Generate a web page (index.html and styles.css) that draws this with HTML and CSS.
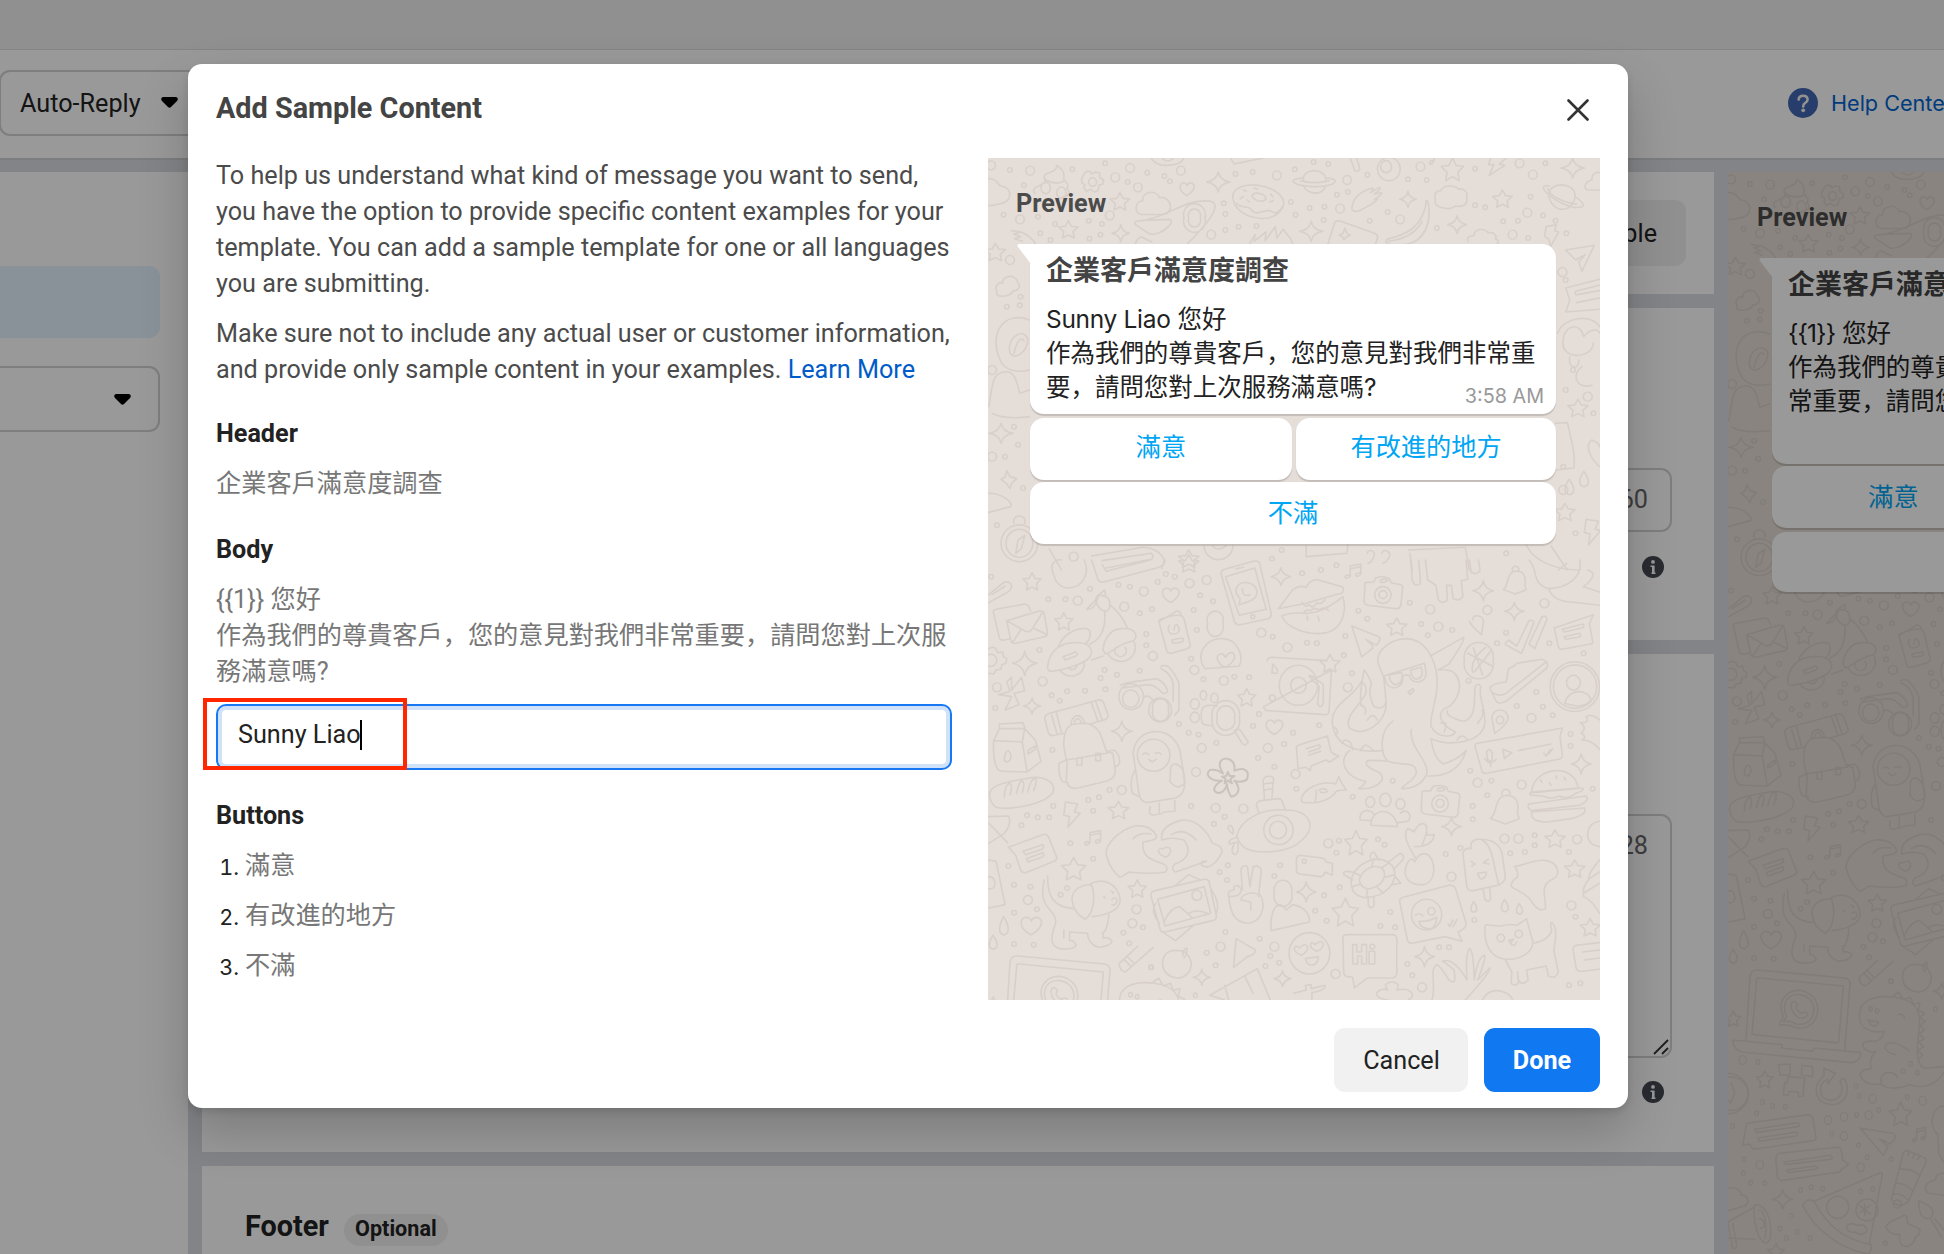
FILE: index.html
```html
<!DOCTYPE html>
<html lang="en">
<head>
<meta charset="utf-8">
<title>Add Sample Content</title>
<link rel="stylesheet" href="styles.css">
</head>
<body>
<svg class="defs" width="0" height="0" aria-hidden="true">
  <defs>
    <marker id="ring-s" markerUnits="userSpaceOnUse" markerWidth="20" markerHeight="20" refX="10" refY="10"><ellipse class="ring" cx="10" cy="10" rx="5.6" ry="7"/></marker>
    <marker id="ring-l" markerUnits="userSpaceOnUse" markerWidth="30" markerHeight="36" refX="15" refY="18"><ellipse class="ring" cx="15" cy="18" rx="11" ry="13.5"/></marker>
    <path id="spark" d="M0-30Q4-5 30 0Q4 5 0 30Q-4 5-30 0Q-4-5 0-30Z"/>
    <path id="star" d="M0-26L8-9L25-7L12 7L15 26L0 17L-15 26L-12 7L-25-7L-8-9Z"/>
    <path id="heart" d="M0 26C-30 8-26-20-12-22Q-3-22 0-12Q6-26 17-20C30-10 20 12 0 26Z"/>
    <path id="cloud" d="M-38 28C-58 24-54-6-34-6C-34-32 4-34 12-14C34-18 48 4 38 18Q34 28 20 28Z"/>
    <path id="note" d="M-8 16V-14L18-20V10M-8-6L18-12M-8 16C-12 26-24 24-20 16Q-14 10-8 16M18 10C14 20 2 18 6 10Q12 4 18 10"/>
    <path id="drop" d="M0-22C14 0 16 20 2 24C-14 22-12 2 0-22Z"/>
    <path id="bolt" d="M-14-38L16-32L8-8L22-4L-8 38L-4 6L-18 2Z"/>
    <path id="bell" d="M-36 34C-18 16-28-34 4-36Q36-34 30 14Q30 24 34 34L0 50Q-20 40-36 34ZM-8-38A10 12 0 1 1 10-36"/>
    <path id="camera" d="M-44-28L-22-30L-18-42Q0-50 16-40L20-28L44-22Q50-20 48-10L44 40Q40 52 30 50L-36 40Q-46 38-46 26ZM0-16A20 25 0 1 0 .1-16ZM0-4A10 12 0 1 0 .1-4ZM-6-36Q6-42 12-34Q4-26-6-30Z"/>
    <g id="doodles">
      <g transform="matrix(.3903 0 0 .3333 0 0)">
        <path d="M0 62C28 62 22 82 34 84C66 90 62 136 28 138Q10 144 0 142M145 62C136 40 178 48 176 22C196 36 196 52 194 62C200 78 160 80 145 62ZM120 106C104 84 150 84 146 66M196 68Q210 80 202 92C214 104 206 116 190 118M136 90A12 17 0 1 1 160 90A12 17 0 1 1 136 90M176 104A12 17 0 1 1 200 104A12 17 0 1 1 176 104"/>
        <path d="M245 50L252 40H262L266 48L276 42L286 44V58L296 66L294 78L284 82L282 98L272 102L264 94L252 100L246 88L248 80L240 74V62ZM258 72A10 13 0 1 0 278 72A10 13 0 1 0 258 72"/>
        <path d="M418 0Q430 24 460 22Q494 22 502 0M446 0Q460 18 476 0M622 0L630 18L706 0M928 0L940 38Q954 42 952 28L944 0"/>
        <path d="M378 200C370 188 380 186 466 184Q476 190 462 206C448 224 420 234 412 226ZM410 184C470 170 510 120 570 130C600 140 570 190 500 270M502 180A28 34 0 1 1 556 180A28 34 0 1 1 502 180M514 180A16 20 0 1 1 544 180A16 20 0 1 1 514 180M376 270Q376 246 392 236L420 252"/>
        <path d="M628 124C622 96 650 76 690 82C736 88 768 120 754 150C736 186 700 186 668 174Q632 156 628 124ZM636 136C650 156 670 138 676 158C692 176 708 150 726 160C740 170 748 160 754 146M676 112C684 100 712 106 712 124C700 136 680 128 676 112ZM654 96l8 3M682 90l8 4M724 108l6 8M722 132l8-4M646 122l8-6M664 126l6 6"/>
        <path d="M808 68C804 28 866 28 866 68C858 76 816 76 808 68ZM806 60C760 64 784 84 836 86C890 86 908 64 868 60M808 82C816 110 858 116 866 82M800 68Q836 80 874 68"/>
        <path d="M932 150C938 110 960 100 984 90Q990 92 980 104L1002 88Q1010 92 990 108L1008 104Q1008 112 990 124L998 124C986 140 962 152 948 160Q932 162 932 150ZM998 30A28 34 0 1 1 1056 36A28 34 0 1 1 998 30M1006 26A14 18 0 1 1 1034 26A14 18 0 1 1 1006 26M1144 0Q1140 22 1132 18Q1130 6 1142 8"/>
        <path d="M1146 122C1142 104 1150 98 1160 98C1166 78 1200 82 1206 94C1222 88 1230 108 1226 116C1232 140 1216 148 1198 144Q1184 156 1168 150C1148 148 1144 136 1146 122ZM1122 128Q1124 124 1128 134Q1138 210 1100 246Q1080 262 1040 262Q1012 256 1022 244C1070 230 1110 210 1122 140ZM1026 250Q1090 240 1112 190M1288 0L1282 20H1296L1284 52L1324 22L1310 18L1328 0"/>
        <path d="M1436 110C1440 70 1500 72 1504 110C1502 170 1444 168 1436 110ZM1438 84C1400 74 1440 130 1500 148C1544 152 1520 128 1504 116M1434 92C1440 116 1480 136 1508 138M1568 44C1560 40 1544 48 1548 66C1530 70 1524 90 1536 96H1568M1230 250C1226 232 1238 234 1244 234C1248 210 1274 210 1280 224C1300 220 1304 236 1300 242Q1316 250 1300 262M1430 206L1456 200L1452 218L1462 222L1442 264L1436 242L1426 236Z"/>
        <path d="M870 262L888 194Q892 186 904 190L990 226Q1000 230 998 240L992 262M900 232L910 226L914 210L920 226L928 232L916 238L912 246L908 236ZM668 262L684 230L682 250L712 222L710 248L736 206L740 240L756 214L776 244L782 262M60 218L84 222L66 228L84 236L68 242L88 250M84 222Q110 234 122 258"/>
        <use href="#star" transform="translate(206 214)"/><use href="#star" transform="translate(338 130)"/><use href="#star" transform="translate(1190 34) scale(1.15 1.3)"/><use href="#star" transform="translate(1318 122)"/>
        <use href="#spark" transform="translate(590 72)"/><use href="#spark" transform="translate(828 220)"/><use href="#spark" transform="translate(1076 124) scale(.7 .8)"/><use href="#spark" transform="translate(1202 200) scale(.8 .9)"/><use href="#spark" transform="translate(1498 30)"/><use href="#spark" transform="translate(340 226) scale(.75 .85)"/>
        <use href="#heart" transform="translate(510 92) scale(.8)"/><use href="#cloud" transform="translate(428 136) scale(.95 1.2)"/>
        <path class="dots-l" d="M8 22L108 38L326 58L384 88L494 38L740 52L920 66L1108 26L1396 50L1362 16L312 172L572 230L1056 184L902 152L1382 164L1344 230L82 184L364 30"/>
        <path class="dots-s" d="M56 36L92 82L216 34L300 16L358 72L408 44L452 54L466 70L634 48L678 42L786 34L834 12L872 18L972 50L1076 64L1124 66L1248 32L1428 16L1248 142L1274 148L1390 116L1422 172L1454 188L1482 226L1384 240L1320 190L1358 188L1150 210L1024 162L978 188L894 110L922 102L860 186L824 150L862 146L788 170L776 132L688 204L642 206L608 216L608 168L604 136L260 242L288 230L258 188L292 198L160 246L134 226L172 198L128 176L40 170"/>
      </g>
      <g transform="matrix(.408 0 0 .3333 -8.2 -18)">
        <path d="M42 454C34 436 50 424 56 430C54 404 90 402 92 426C104 440 92 454 82 452C74 474 34 474 42 454ZM122 540C60 510 20 580 50 660C60 690 90 700 122 690M74 640C64 590 110 560 118 600C114 640 86 660 74 640ZM84 640C90 600 104 590 108 602M22 800C32 740 28 700 60 696C90 690 92 740 98 760L122 750M30 820Q60 840 122 830M20 1060C60 1060 80 1090 76 1100L20 1118M52 1210A44 54 0 1 1 142 1210A44 54 0 1 1 52 1210M64 1210A32 41 0 1 1 130 1210A32 41 0 1 1 64 1210M88 1240L94 1200L110 1186L102 1226ZM84 1150A14 16 0 1 1 110 1150M52 1018L62 1012L66 992L74 1010L90 1016L78 1030L74 1046L66 1032Z"/>
        <path d="M1436 330L1506 316L1476 394L1468 366L1484 344L1460 360ZM1519 418L1436 444Q1442 464 1446 480L1436 516L1519 508M1519 436L1460 454Q1456 464 1464 464L1519 452M1519 474L1462 488M1416 580C1430 530 1500 520 1519 560M1430 600C1430 560 1470 540 1480 590C1500 560 1519 570 1519 580M1430 600C1420 660 1500 660 1504 610M1446 650C1440 690 1470 690 1468 660M1476 680C1450 700 1460 750 1500 736M1440 848C1450 900 1460 940 1456 984L1411 990M1411 850L1440 848M1519 980C1500 960 1480 920 1500 900Q1519 910 1519 920"/>
        <path d="M170 1226L200 1290M274 1248L400 1222Q440 1226 452 1260L446 1286M300 1262L420 1240Q430 1250 420 1258L310 1284M550 1218A34 40 0 0 0 620 1218M570 1218Q584 1236 604 1218M800 1218V1250L900 1240L902 1216M950 1240C950 1226 972 1230 966 1250Q960 1268 952 1270M986 1240C986 1226 1008 1230 1004 1250Q996 1268 988 1270M1050 1230L1190 1222L1200 1290M1060 1290L1054 1240M1340 1216C1360 1270 1420 1290 1470 1290M1400 1218L1440 1290"/>
        <use href="#star" transform="translate(38 336)"/><use href="#spark" transform="translate(52 880)"/><use href="#star" transform="translate(1466 804)"/><use href="#star" transform="translate(1434 1116)"/><use href="#bolt" transform="translate(1500 1176)"/><use href="#drop" transform="translate(1480 1016)"/><use href="#drop" transform="translate(1444 1040)"/><use href="#star" transform="translate(512 1256)"/>
        <path class="dots-l" d="M74 360L1428 396L30 690L1490 770L30 950L1430 1050L230 1250"/>
        <path class="dots-s" d="M100 470L66 500L98 496L84 860L94 914L62 950L106 1044L42 1156L1436 750L1454 690L1504 820L1430 980L1460 1180L1436 420L716 1256L740 1230L1290 1240"/>
      </g>
      <g transform="matrix(.408 0 0 .3333 -8.2 402)">
        <path d="M180 40C170 10 186-4 200 0M256 0C268 30 260 82 216 84Q188 82 180 40M274 0L290 60Q294 68 304 66L440 22Q454 14 454 0M300 14L310 34L418 0M22 104L58 68Q74 60 78 78Q78 92 60 102L22 128M30 104L62 78M34 160Q30 152 40 148L110 132Q120 132 124 152M34 160L48 234Q50 242 60 240L74 236M66 182L144 154Q156 150 158 162L166 218Q166 228 158 230L88 250Q78 252 76 242ZM66 182L112 214Q122 218 128 208L154 156M80 248L100 210M162 222L134 206"/>
        <path d="M286 110L306 90L308 104M262 148L290 112Q282 150 262 148M284 118C284 100 316 104 318 126C322 150 308 160 300 150Q286 140 284 118ZM306 152Q312 230 270 252M318 134Q346 160 362 204M166 320C170 280 190 250 230 248C276 244 284 280 262 300C240 318 200 330 176 334Q166 334 166 320ZM192 262C200 230 230 202 262 206C276 210 272 240 258 252M302 270C304 240 320 204 350 206C384 202 392 236 372 244C344 250 324 276 308 282ZM314 280A34 40 0 1 0 378 246M334 262A14 17 0 1 0 356 262M196 330A32 34 0 0 0 256 310M216 322A12 14 0 0 0 238 318M204 290L234 276Q244 282 236 288L210 300ZM274 300L302 288"/>
        <path d="M22 266L30 262L38 264L44 278L56 276L58 290L66 296L64 310L54 314L52 328L40 330L34 342L22 340M22 284A15 18 0 1 1 22 318M66 366L78 352V390L102 352L110 392L84 400L96 434L62 450L78 410L46 404L74 394ZM48 506V492L106 488L110 502M48 506L34 542L104 546L110 506ZM34 542Q32 600 42 624Q46 634 56 634L116 636L104 546M110 506L136 540L150 604L116 636M60 600C62 560 78 570 76 596Q68 614 60 600ZM118 572L136 558V568L118 582ZM24 708C20 670 80 664 120 654C160 646 190 670 178 700C150 740 60 750 40 742Q26 730 24 708ZM60 712C60 690 66 670 74 670Q82 676 74 704M90 700C94 680 96 664 104 662Q112 668 104 698M118 696C122 670 128 656 136 654Q142 664 132 692"/>
        <path d="M160 480Q156 466 172 460L290 420Q300 418 304 430L314 464Q316 476 304 480L270 492M160 480L168 518Q172 530 182 526L206 520M176 466L190 524M188 458L200 516M274 430L290 486M284 424L300 480M224 492A16 24 0 0 1 256 490M232 490A8 14 0 0 1 248 490M206 560Q204 500 230 492L262 490Q290 500 298 530L312 580M206 560L212 600L310 580M214 602L212 664Q218 690 240 684L310 664Q334 654 332 630L326 580L312 576M194 610L216 598M194 610Q192 650 204 666L216 668M314 574L330 570Q346 590 342 610Q336 622 330 620M238 594h12v22h-12ZM284 580h12v22h-12Z"/>
        <path d="M342 400A28 36 0 1 1 400 420A28 36 0 1 1 342 400M350 416A20 26 0 1 1 390 416A20 26 0 1 1 350 416M414 450A28 36 0 1 1 470 450A28 36 0 1 1 414 450M424 450A20 26 0 1 1 462 450A20 26 0 1 1 424 450M402 412Q412 402 424 420M344 376Q350 368 434 356Q452 366 460 390Q460 402 448 400Q430 374 412 374L350 384M444 320Q450 314 460 318Q480 340 488 370V450L478 466M444 326Q470 340 474 372V424"/>
        <path d="M376 580C380 500 470 490 490 570L500 640Q510 700 480 714L410 728Q394 726 390 700ZM386 586A40 48 0 1 1 466 586A40 48 0 1 1 386 586M400 582Q408 576 414 584M430 580Q438 574 444 582M414 598Q422 612 432 598M468 620Q480 600 498 630L502 670Q484 694 466 664ZM380 632Q366 660 374 700L390 710M418 740Q412 764 424 766L440 762V730M444 762Q448 754 478 754V722"/>
        <path d="M440 190Q436 180 446 176L476 166Q496 164 500 174L516 256Q516 264 508 266L470 280Q460 280 458 272ZM440 184L484 152Q494 156 494 168M464 196Q458 218 472 222Q492 222 488 204Q484 190 478 196L476 210M470 240L496 234Q502 240 496 246L474 250ZM558 190A20 28 0 1 1 596 190A20 30 0 1 1 558 190M544 310C534 270 560 232 598 236C632 240 648 290 636 318Q600 322 552 326ZM602 322C580 310 576 284 590 282Q598 280 602 292Q612 272 622 280Q632 300 602 322Z"/>
        <path d="M592 44Q590 32 600 28L670 4Q682 0 686 10L714 160Q716 172 706 176L638 194Q628 196 624 184ZM602 50L674 24L702 148L636 166ZM628 26L646 22M664 170a5 6 0 1 0 10 0a5 6 0 1 0-10 0M636 134L638 116C616 90 634 64 656 68C684 74 686 110 664 122ZM644 86C642 104 652 110 662 104"/>
        <path d="M732 146L768 88Q784 74 800 82Q810 56 830 60L888 80Q896 90 886 100L850 112L800 130ZM740 168Q760 156 800 160Q840 160 890 110C900 150 890 206 850 218C800 230 750 200 740 168ZM790 126Q796 144 808 134Q816 150 826 128Q838 136 846 118M794 160Q798 146 810 152Q822 140 832 150Q846 138 854 152M802 168L804 180M828 168L832 182"/>
        <path d="M704 302Q706 292 716 292L850 302M862 330L856 454Q854 466 844 464L706 452Q696 450 696 440ZM734 376A47 60 0 1 1 828 376A47 60 0 1 1 734 376M762 376A19 24 0 1 1 800 376A19 24 0 1 1 762 376M808 350Q806 346 814 348L842 374V430Q836 450 828 432L832 380ZM718 312L730 330L728 340H716ZM710 414a7 9 0 1 0 14 0a7 9 0 1 0-14 0M570 474A34 42 0 1 1 636 474A34 42 0 1 1 570 474M582 474A22 28 0 1 1 624 474A22 28 0 1 1 582 474M624 512Q632 504 638 510L658 546Q652 560 644 552ZM540 406a8 14 0 1 0 16 0a8 14 0 1 0-16 0M566 414a9 14 0 1 0 18 0a9 14 0 1 0-18 0M516 430a10 14 0 1 0 22 4a10 14 0 1 0-22-4M516 470a10 14 0 1 0 22 4a10 14 0 1 0-22-4M582 438Q550 430 544 450Q540 490 550 494L572 498"/>
        <path class="bold" d="M590 604C600 588 628 596 624 632C646 620 664 630 654 660Q636 670 624 662C644 690 630 708 616 710Q606 690 606 672C600 700 582 706 574 690Q576 672 594 662C560 664 552 640 564 630Q580 626 596 640C588 624 586 612 590 604ZM608 636L612 648L624 648L614 658L618 670L608 662L600 670L602 656L594 650L604 648Z"/>
        <path d="M976 310C970 270 1010 236 1046 236C1094 240 1110 290 1118 330C1130 400 1100 470 1106 500C1126 540 1160 530 1166 516C1120 490 1120 450 1150 440C1190 400 1180 330 1142 330L1124 330M976 310L990 352Q994 400 996 430C996 490 940 536 906 504C892 470 930 440 946 400C950 380 940 366 934 366C920 410 860 430 864 490C870 550 910 580 990 572M990 348L1090 310L1094 340Q1092 364 1074 366Q1056 366 1052 346Q1040 342 1036 350Q1040 378 1016 384Q996 380 994 360ZM1004 344L1034 338Q1040 368 1020 374Q1004 372 1004 344ZM1056 330L1082 322Q1090 354 1070 358Q1056 354 1056 330M1104 288L1186 232Q1190 240 1150 312L1124 330M1106 536C1150 560 1230 550 1238 490C1240 430 1220 420 1228 380Q1222 366 1214 380C1210 420 1220 470 1186 484Q1140 470 1146 452M1012 484C980 510 980 580 1000 604C1040 620 1070 600 1070 640C1060 670 1040 670 1034 686Q1080 686 1096 640C1100 600 1050 560 1058 508M1106 536C1110 580 1120 600 1136 612Q1170 600 1192 572C1180 620 1150 650 1098 648M994 430Q990 450 966 440Q950 400 960 370Q950 340 942 330Q930 400 934 436M906 572C880 600 890 650 946 664Q940 680 928 686Q970 690 986 660Q990 640 966 630Q940 616 950 602Q970 600 1000 604M888 550Q894 530 910 550L914 570M934 572Q944 540 964 572M866 500Q884 510 872 526M936 436Q950 444 944 462M950 480Q964 454 974 480M1130 490Q1150 480 1138 516M1170 540Q1180 516 1196 540M1220 490Q1240 460 1230 450M1050 396l12-10q6 6-8 18Z"/>
        <path d="M912 198L978 230Q986 236 972 256L946 238Q970 260 960 268L936 290ZM1188 302A36 44 0 1 1 1258 302A36 44 0 1 1 1188 302M1196 280L1256 318M1210 264L1232 344M1240 262Q1200 300 1208 336M1252 274L1212 336M1288 250L1296 240L1316 258L1346 182Q1356 178 1358 188L1328 280L1288 254M1346 252L1378 170Q1390 166 1390 178L1360 266ZM1408 204L1504 164L1494 190L1502 244Q1504 252 1496 252L1428 268Q1420 268 1418 260ZM1428 208L1478 192Q1484 200 1476 204L1432 216ZM1432 230L1470 220Q1476 226 1468 232L1436 238ZM1250 384Q1256 370 1290 366L1296 326Q1310 320 1316 310L1378 298Q1396 304 1390 324L1290 424Q1270 436 1264 420ZM1256 398Q1280 416 1300 390L1388 306M1398 380A60 74 0 1 1 1519 380A60 74 0 1 1 1398 380M1406 380A52 64 0 1 1 1512 380A52 64 0 1 1 1406 380M1438 368A17 22 0 1 1 1472 368A17 22 0 1 1 1438 368M1434 430C1440 386 1490 384 1498 420Q1480 450 1434 430"/>
        <path d="M1214 560Q1212 552 1220 550L1428 504L1422 530L1428 586Q1428 596 1418 598L1242 640Q1232 642 1230 630ZM1242 576Q1250 560 1256 580V600Q1248 608 1244 596ZM1238 596Q1250 620 1266 598M1252 608V620M1282 568L1304 578L1286 596ZM1320 572L1400 552M1382 580L1388 588L1398 570M1394 582L1404 566M1256 480C1250 440 1300 440 1294 480Q1286 500 1262 520ZM1266 480a8 10 0 1 0 18 0a8 10 0 1 0-18 0M1208 180C1206 160 1240 164 1234 190L1230 224Q1206 200 1200 184M1519 480Q1500 460 1486 470Q1496 490 1472 488Q1490 504 1474 520Q1490 530 1476 540Q1500 540 1519 568M1352 696C1356 650 1390 630 1420 632C1450 636 1464 660 1466 684ZM1350 706Q1344 696 1356 698L1478 684Q1482 694 1460 700Q1440 720 1420 708Q1400 720 1380 708ZM1346 732L1486 708Q1496 722 1470 736L1352 752Q1340 744 1346 732ZM1352 756L1482 744Q1490 764 1450 776L1390 786Q1350 786 1352 756M1374 660l4 8M1396 668l4 8M1412 648l2 8M1432 652l4 8"/>
        <path d="M776 560L780 556L852 528L860 572Q862 580 880 588L858 606L848 600L812 618L810 632L800 622L780 626ZM800 566L832 554Q838 562 830 566L806 576M806 586L836 574M788 720C790 690 830 660 872 672L880 650L886 668L898 690Q880 690 874 694C860 720 830 730 806 728Q788 730 788 720ZM824 690Q826 710 822 724M832 690Q846 680 852 694Q844 700 834 696M630 826C640 780 690 744 750 750C810 750 826 800 790 840C760 880 680 884 650 864Q634 850 630 826ZM696 810A36 44 0 1 1 768 810A36 44 0 1 1 696 810M710 810A21 26 0 1 1 752 810A21 26 0 1 1 710 810M684 758L678 736Q678 724 690 722L730 716Q740 716 742 726L748 748M698 720L694 660L700 650Q718 646 720 656L716 714M696 672L718 668M698 690L718 686M630 832Q606 840 612 852L632 846Q636 880 626 884Q612 880 624 850M620 822Q602 804 612 796Q624 800 620 822"/>
        <path d="M932 780C930 750 952 744 966 762M958 796C960 740 1016 740 1024 800ZM1030 760C1050 740 1060 770 1050 784L1024 788M932 780L958 782M946 726a11 16 0 1 0 22 0a11 16 0 1 0-22 0M980 720a14 20 0 1 0 28 0a14 20 0 1 0-28 0M1020 732a11 16 0 1 0 22 0a11 16 0 1 0-22 0M1068 894C1040 840 1040 820 1048 806Q1060 810 1064 816Q1080 780 1094 796L1096 826L1114 824Q1110 860 1066 860M1084 856Q1100 810 1094 796M1066 906Q1060 888 1048 908C1030 960 1060 976 1086 974C1120 970 1120 900 1096 882Q1076 876 1066 906ZM910 960C920 910 970 884 1000 906C1030 930 1020 980 980 1004C940 1024 908 1010 910 960ZM930 960C940 920 970 914 984 924C1000 940 990 970 970 980C950 994 934 984 930 960ZM960 920L966 896M984 924L1004 908M992 952L1018 944M974 982L990 1000M950 988L948 1010M934 972L914 980M934 948L914 936M958 900Q954 876 966 876L978 900M1004 904L1030 880Q1044 888 1036 900L1018 924M1018 950L1032 970L1010 974M914 960L892 944Q888 930 912 936M952 1010V1036Q960 1050 966 1036V1010"/>
        <path d="M1184 880Q1188 862 1204 866Q1200 840 1222 838Q1270 836 1280 880L1288 950Q1288 966 1270 976L1210 992Q1198 994 1194 982ZM1230 840Q1250 850 1258 900L1272 976M1204 904L1214 912L1206 918M1246 898L1234 908L1248 912M1220 940L1242 936Q1240 960 1226 956ZM1234 988L1238 1018Q1250 1032 1252 1014L1250 984M1310 920C1340 916 1360 894 1390 902C1420 910 1426 950 1400 960C1370 980 1390 1020 1386 1046Q1370 1060 1350 1020C1340 1000 1310 990 1302 978Q1304 960 1318 952Q1320 930 1310 920ZM1519 900Q1490 940 1492 960Q1476 980 1480 1010Q1500 1020 1519 1060M1494 956L1519 936M1480 1000L1519 970"/>
        <path d="M312 892C300 860 340 810 380 798Q420 794 432 826Q440 840 400 846C396 890 420 900 446 910Q464 916 456 936Q420 944 366 936Q350 950 344 952Q320 930 312 892ZM376 836Q390 816 420 822M446 840Q440 800 490 782C530 770 560 820 570 850Q600 860 592 880C580 910 560 930 544 916Q540 900 556 904L480 936Q466 930 478 912C510 900 520 870 500 840Q470 830 446 840ZM470 824Q500 800 530 840M456 892C430 880 436 862 450 866Q462 856 468 870Q468 884 456 892ZM70 862L154 824Q164 820 168 830L188 890Q190 900 182 904L112 938Q104 940 100 930L88 886ZM106 874L154 854Q160 862 152 868L112 884ZM114 896L154 878Q160 886 152 892L118 906Z"/>
        <path d="M158 960C140 1050 190 1046 186 1090C170 1140 176 1160 196 1166Q230 1170 236 1156Q230 1140 220 1142V1116L264 1120Q264 1150 290 1162Q320 1160 324 1144Q316 1130 302 1134V1116M166 948C166 1010 180 1042 230 1046M226 1020C224 984 260 970 274 976C284 1010 280 1060 258 1078Q230 1060 226 1020ZM268 974C300 950 340 970 344 1020Q344 1060 276 1070M316 1064Q316 1090 306 1116M206 1110V1134M304 1010l3 4M322 994q8 2 4 6M324 1018Q336 1008 336 1024Q332 1040 324 1034M420 1010Q416 996 430 992L550 958Q560 956 562 966L580 1068Q580 1080 570 1082L454 1116Q444 1118 442 1108ZM436 1018L550 980L566 1060L454 1098ZM452 1084Q470 1040 490 1040L520 1072M510 1062Q530 1044 562 1062M520 1006a11 14 0 1 0 24 0a11 14 0 1 0-24 0M480 976L512 944L540 960M450 1118L480 1142L526 1094M568 990Q590 1030 580 1060M432 1030Q416 1050 440 1090"/>
        <path d="M644 990L640 930Q644 912 656 920L662 980L670 920Q686 914 690 930L684 1000C700 1020 700 1080 660 1090C620 1090 614 1050 610 1010Q606 990 624 990Q620 976 632 976ZM612 1010Q640 1010 640 990M640 1020L664 1026V1050M640 1020C640 1000 680 990 684 1010M722 1000A22 30 0 1 1 764 1000A22 30 0 1 1 722 1000M714 1112C712 1060 720 1036 738 1034L752 1050L766 1034C800 1040 810 1070 808 1086ZM776 896Q778 886 786 886L838 894Q848 896 848 906L864 910V946L846 936Q844 950 834 950L784 942Q776 940 776 930ZM790 904a5 6 0 1 0 10 0a5 6 0 1 0-10 0M1030 1030Q1026 1016 1038 1012L1150 976Q1162 974 1166 986L1192 1090Q1194 1104 1172 1116L1182 1144L1140 1130L1060 1150Q1050 1150 1048 1140ZM1058 1064A37 46 0 1 1 1132 1064A37 46 0 1 1 1058 1064M1068 1066Q1078 1056 1086 1068M1098 1054a8 10 0 1 0 18 0a8 10 0 1 0-18 0M1076 1084Q1100 1086 1120 1072Q1118 1110 1098 1106Q1080 1104 1076 1084M1148 1092L1152 1100L1160 1080M1160 1100L1170 1078"/>
        <path d="M758 1180A50 62 0 1 1 858 1180A50 62 0 1 1 758 1180M788 1186C760 1170 772 1150 784 1164Q796 1146 804 1162Q804 1176 788 1186ZM826 1174C800 1160 812 1140 822 1154Q836 1136 842 1152Q842 1166 826 1174ZM798 1196L830 1190Q828 1216 812 1216Q800 1212 798 1196M890 1134Q890 1124 900 1124H1010Q1022 1124 1022 1136V1242Q1020 1254 1010 1254H950L918 1284L914 1252L902 1250Q892 1248 892 1236ZM914 1154H924V1176H936V1154H948V1212H936V1188H926V1212H914ZM954 1174H968V1212H954ZM956 1160a5 6 0 1 0 12 0a5 6 0 1 0-12 0M628 1136L676 1170Q676 1184 656 1190L622 1222Z"/>
        <path d="M1238 1104Q1236 1090 1250 1096L1276 1098Q1300 1090 1316 1096L1340 1076L1352 1130C1366 1170 1330 1200 1290 1198C1250 1194 1236 1150 1238 1104ZM1268 1134a8 10 0 1 0 18 0a8 10 0 1 0-18 0M1312 1122a8 10 0 1 0 18 0a8 10 0 1 0-18 0M1296 1142L1308 1138L1302 1148ZM1300 1150Q1310 1164 1316 1146M1356 1150Q1396 1140 1402 1110C1396 1090 1400 1080 1408 1096C1420 1140 1400 1160 1410 1190L1418 1236Q1410 1260 1394 1248L1388 1218L1340 1230L1344 1260Q1330 1280 1320 1260L1318 1236L1320 1270Q1310 1280 1302 1270L1304 1236L1288 1200M1108 1320C1120 1280 1100 1230 1120 1214Q1126 1214 1150 1260Q1170 1280 1162 1230Q1140 1206 1134 1204Q1160 1190 1194 1260Q1190 1180 1200 1166Q1210 1170 1212 1260Q1220 1190 1238 1186Q1240 1200 1220 1260L1250 1224Q1256 1230 1190 1320M1232 1320Q1244 1290 1270 1292Q1298 1296 1306 1320M1519 1148L1462 1156Q1454 1158 1454 1170L1462 1226Q1466 1236 1476 1234L1519 1228M1519 1170L1478 1176M1519 1194L1482 1200M1000 1320C950 1310 980 1280 1000 1290C976 1260 1040 1256 1022 1290C1060 1280 1070 1310 1050 1320M770 1300L800 1290L798 1276L812 1274V1286L846 1276Q850 1290 814 1298V1320M564 1306L680 1226L712 1320M600 1276L610 1320M650 1250L670 1300M564 1306L600 1320"/>
        <path d="M22 770L70 768Q80 790 60 820L22 850M22 790L68 848M1056 0L1060 60Q1066 84 1080 70L1076 0M1092 0L1098 60L1118 76L1124 120Q1134 134 1146 120L1144 76H1156L1160 116Q1176 126 1184 110L1180 62L1196 58L1192 0M1200 0L1204 36Q1220 48 1226 30L1222 0M1346 0C1370 30 1350 70 1394 86C1440 84 1480 50 1470 0M1394 86Q1406 124 1450 126L1519 136M1418 30L1438 10M1490 30Q1520 40 1480 80L1519 96M1519 784Q1488 790 1490 830Q1494 856 1519 860M22 900L40 904L62 1034L22 1044M22 950Q40 950 36 980Q30 990 22 986"/>
        <use href="#camera" transform="translate(988 96)"/><use href="#camera" transform="translate(1128 722)"/><use href="#bell" transform="translate(1312 62) scale(.8)"/><use href="#bell" transform="translate(1288 742)"/>
        <use href="#note" transform="translate(916 32)"/><use href="#note" transform="translate(278 832)"/><use href="#bolt" transform="translate(224 764)"/>
        <use href="#heart" transform="translate(468 104) scale(.9)"/><use href="#heart" transform="translate(722 500) scale(.9)"/><use href="#heart" transform="translate(126 1096) scale(1.1)"/>
        <use href="#star" transform="translate(128 64) scale(.9 1)"/><use href="#star" transform="translate(206 184) scale(.9 1)"/><use href="#star" transform="translate(654 412) scale(.9 1)"/><use href="#star" transform="translate(858 310)"/><use href="#star" transform="translate(1022 200)"/><use href="#star" transform="translate(340 750)"/><use href="#star" transform="translate(230 926) scale(1.2 1.3)"/><use href="#star" transform="translate(386 986) scale(.9 1)"/><use href="#star" transform="translate(922 848) scale(1.1 1.4)"/><use href="#star" transform="translate(896 1056) scale(1.3 1.6)"/><use href="#star" transform="translate(1410 836)"/><use href="#star" transform="translate(1458 926)"/><use href="#star" transform="translate(1496 1102)"/><use href="#star" transform="translate(512 10)"/>
        <use href="#spark" transform="translate(110 310) scale(1 1.2)"/><use href="#spark" transform="translate(128 438) scale(.7 .8)"/><use href="#spark" transform="translate(348 514) scale(.85 1)"/><use href="#spark" transform="translate(738 50) scale(.8 .9)"/><use href="#spark" transform="translate(1234 92) scale(.85 1)"/><use href="#spark" transform="translate(1310 154) scale(.8 .9)"/><use href="#spark" transform="translate(1156 800) scale(.8 .9)"/><use href="#spark" transform="translate(1474 612) scale(.8 1)"/><use href="#spark" transform="translate(1090 1190) scale(.8 1)"/><use href="#spark" transform="translate(544 1252) scale(.7 .8)"/><use href="#spark" transform="translate(742 1256) scale(.7 .8)"/><use href="#spark" transform="translate(800 996) scale(.8 1)"/>
        <use href="#drop" transform="translate(58 1096) scale(1 1.2)"/><use href="#drop" transform="translate(32 1146) scale(.9)"/><use href="#drop" transform="translate(1286 1036) scale(.8)"/><use href="#drop" transform="translate(1322 1046) scale(.7)"/><use href="#drop" transform="translate(1210 1040) scale(.7)"/>
        <path class="dots-l" d="M240 122L354 140L402 94L424 288L154 364L42 382L556 60L690 218L754 262L598 362L526 330L544 564L706 564L530 636L578 744L646 746L854 850L1104 148L1244 150L1384 130L1124 200L1352 474L1328 674L1220 668L1286 836L1320 836L1464 838L374 1090L118 1020L384 1048L590 1160L722 1160L872 1242L1084 1282L1450 1036L1156 950L902 382L348 690L774 642L514 70"/>
        <path class="dots-s" d="M168 118L210 118L270 86L340 74L368 80L392 160L422 148L436 66L456 42L478 50L146 270L408 222L408 256L306 330L308 388L392 332L336 344L296 354L258 392L214 394L176 406L196 422L38 444L178 570L180 738L170 772L142 772L116 766L102 796L318 690L292 712L266 720L278 752L222 850L278 896L70 918L84 974L124 980L198 1004L214 984L140 1048L84 1058L84 1152L132 1154L352 1118L400 1102L366 1150L420 1222L540 106L572 124L524 150L532 210L518 296L548 358L624 350L660 352L684 462L670 498L488 492L512 518L536 524L580 548L682 594L722 620L746 552L768 518L832 496L790 40L836 30L874 16L928 152L950 176L896 228L892 286L912 340L802 248L826 250L718 230L1054 128L1082 192L1158 210L1098 226L1290 218L1268 250L1396 250L1480 280L1198 362L1316 438L1380 440L1404 466L1364 396L1448 522L1448 558L1202 632L1254 662L1244 706L1208 738L1208 778L1360 826L1360 856L1444 876L1300 880L1336 876L1178 864L1142 882L992 854L976 838L880 842L874 878L914 710L1012 662L776 686L518 738L574 792L600 770L608 916L588 936L606 960L736 916L722 948L844 1006L822 1052L850 1082L882 982L982 1098L1006 1056L1018 1102L1212 1080L1126 1162L1150 1162L1048 1212L1060 1246L712 1188L700 1218L734 1208L578 1216L556 1178L602 1116L686 1136L1460 1070L1444 1276L1472 1270L1502 686L28 50"/>
      </g>
      <g transform="matrix(.3333 0 0 .3333 0 788)">
        <path d="M54 240L66 48Q70 28 90 30L350 54Q368 58 366 74L350 270M72 222L86 60Q86 52 94 54L346 78L332 246Q330 250 324 248L78 224ZM14 240L162 254V264L252 274L260 264L398 278Q400 304 370 308L40 276Q14 266 14 240ZM154 194L166 170C144 120 180 86 222 92C286 106 282 190 228 204Q204 208 188 196ZM166 184L176 170C158 130 180 100 216 104C270 112 270 180 226 192Q204 196 190 184ZM190 130Q200 118 208 134L204 144Q210 156 220 160Q240 150 238 166Q224 184 202 166Q186 146 190 130Z"/>
        <path d="M396 180C384 120 440 104 500 112C560 120 580 150 574 200C566 260 560 330 600 324L648 320M396 180C400 210 440 220 468 214Q464 240 440 244Q400 240 404 260Q420 280 444 274Q420 300 430 326Q390 330 398 350C410 374 440 376 460 372C450 330 500 330 508 352M460 372C480 390 520 386 544 374C590 390 630 370 648 336M496 108L512 96L526 120M530 118L548 112L556 134M556 132L576 128L570 152M574 152L590 160L576 172L592 184L576 196L590 210L574 222L588 236L572 246L586 260L570 272L584 286L572 296M420 180L452 186Q446 202 430 196ZM510 164Q524 158 530 174M544 272Q480 230 470 262Q476 280 502 284M422 146a5 6 0 1 0 11 0a5 6 0 1 0-11 0M442 152a5 6 0 1 0 11 0a5 6 0 1 0-11 0"/>
        <path d="M152 314L186 312V344L156 346ZM222 316L254 320V350L220 346ZM180 350L230 354V368H228L226 408L212 410L210 396L184 394L180 406L166 404L170 368H178ZM288 324L322 340L300 372L298 358C270 370 270 410 300 420C340 424 350 390 336 364Q342 350 352 360C370 410 340 436 310 434C260 430 250 380 288 346ZM0 340A60 60 0 1 1 0 462M0 352A50 50 0 1 1 0 450M10 370L20 400L8 430L0 420M44 556L56 490L240 464Q252 464 254 474L264 532Q264 540 256 542L76 568L64 552ZM80 508L210 488Q218 494 210 500L84 518ZM90 534L206 516Q212 522 204 528L94 544ZM144 600Q142 584 156 580L330 562Q338 562 340 572L344 600L362 614L344 626L334 636L160 662Q150 660 148 650ZM168 606L308 586Q318 592 308 598L172 614ZM176 630L262 618Q272 622 264 628L180 638Z"/>
        <path d="M258 724L456 638Q464 636 462 650L424 850M258 724Q236 712 224 736C260 810 340 870 424 882Q430 870 430 854C350 840 300 800 258 724M296 742a33 33 0 1 0 66 0a33 33 0 1 0-66 0M384 750a33 33 0 1 0 66 0a33 33 0 1 0-66 0M396 738L426 762M410 732V766M424 738L396 758M356 800Q366 784 386 796Q420 790 416 816Q400 830 380 816Q360 820 356 800M396 504L492 520Q504 522 500 536L488 552L454 536L480 560L466 586ZM526 578Q530 570 540 572L586 592Q596 596 594 606L540 726Q510 750 490 718ZM514 628Q550 624 576 646M502 670Q530 668 552 690M494 704Q520 694 542 724M496 732a12 12 0 1 0 24 0a12 12 0 1 0-24 0M544 574L540 586M560 580L554 594M576 588L568 600M648 438C610 440 600 500 630 524L632 580L648 608M648 640Q624 640 622 660C590 664 586 690 602 700L648 706M572 722L600 736C624 750 616 780 596 776Q572 770 572 722ZM610 780L640 830M620 776L648 810M474 802C480 780 510 780 526 766Q540 764 538 790L576 808Q574 830 562 830C560 850 540 866 522 856Q510 840 516 824Q480 824 474 802M0 686C30 676 40 700 38 704C64 706 64 730 50 738L0 752M0 786L78 742M0 834L80 838M78 740C90 720 130 750 128 820Q128 850 112 850C90 840 76 790 78 740ZM92 750C110 750 120 800 110 836M94 776Q112 780 108 800L96 806M0 790L14 864Q24 870 26 856L14 790"/>
        <path d="M394 52L450 0M394 52Q394 74 412 78L496 4M408 40L430 62M416 30L440 54M524 60C520 20 550 10 566 14Q600 10 610 50C610 80 590 96 566 96Q530 90 524 60ZM584 30Q584 10 596 6Q600 20 588 36"/>
        <use href="#star" transform="translate(16 176) scale(.9)"/><use href="#star" transform="translate(110 358)"/><use href="#star" transform="translate(518 462) scale(1.35)"/><use href="#spark" transform="translate(164 718)"/><use href="#note" transform="translate(574 522)"/><use href="#star" transform="translate(144 876)"/>
        <path class="dots-l" d="M44 300L300 480L434 416L584 422L96 614L398 622L422 466L348 470L348 528"/>
        <path class="dots-s" d="M90 306L104 426L134 438L172 440L86 460L14 498L48 598L46 640L68 668L110 670L218 690L250 682L284 686L190 768L156 806L208 816L176 834L246 834L394 408L384 378L386 464L452 450L538 412L392 556L418 592L490 598L488 64L622 148L548 312L526 334L568 338L312 522L398 694L434 686L472 850"/>
      </g>
    </g>
  </defs>
</svg>

<div class="page">
  <div class="topbar"></div>
  <header class="navbar">
    <div class="template-select"><span>Auto-Reply</span><svg width="17" height="11" viewBox="0 0 17 11"><path d="M2 0H15Q18 1 16 4L10 10Q8.500 11.500 7 10L1 4Q-1 1 2 0Z"/></svg></div>
    <a class="help"><svg width="30" height="30" viewBox="0 0 30 30"><circle cx="15" cy="15" r="15" fill="#4267b2"/><path d="M10.600 11.500Q11 7.800 15.200 7.800T19.600 11.600Q19.600 13.600 17.200 14.900Q15.200 16 15.200 18.400" fill="none" stroke="#f2f2f2" stroke-width="2.600" stroke-linecap="round"/><circle cx="15.200" cy="22.300" r="1.900" fill="#f2f2f2"/></svg><span>Help Center</span></a>
  </header>
  <div class="columns">
    <aside class="sidebar">
      <div class="selected"></div>
      <div class="select"><svg width="17" height="11" viewBox="0 0 17 11"><path d="M2 0H15Q18 1 16 4L10 10Q8.500 11.500 7 10L1 4Q-1 1 2 0Z"/></svg></div>
    </aside>
    <main class="cards">
      <section class="card card-top"><div class="sample-btn">Add Sample</div></section>
      <section class="card card-header">
        <div class="field">60</div>
        <svg class="info" width="22" height="22" viewBox="0 0 22 22"><circle cx="11" cy="11" r="11" fill="#444950"/><circle cx="11" cy="5.900" r="1.900" fill="#fff"/><path d="M8.500 9.500H12.600V16.500H13.500V18H9.500V16.500H10V11H8.500Z" fill="#fff"/></svg>
      </section>
      <section class="card card-body">
        <div class="field area">1028<svg class="grip" width="16" height="16" viewBox="0 0 16 16"><path d="M1 15L15 1M9 15L15 9" stroke="#333" stroke-width="1.800" fill="none"/></svg></div>
        <svg class="info" width="22" height="22" viewBox="0 0 22 22"><circle cx="11" cy="11" r="11" fill="#444950"/><circle cx="11" cy="5.900" r="1.900" fill="#fff"/><path d="M8.500 9.500H12.600V16.500H13.500V18H9.500V16.500H10V11H8.500Z" fill="#fff"/></svg>
      </section>
      <section class="card card-footer"><h2>Footer</h2><span class="pill">Optional</span></section>
    </main>
    <aside class="preview side">
      <svg class="wall" width="612" height="1082" viewBox="0 0 612 1082"><use href="#doodles"/></svg>
      <h3>Preview</h3>
      <div class="bubble">
        <svg class="tail" width="14" height="20" viewBox="0 0 14 20"><path d="M14 0H2Q-.5 .5 1 3L14 20Z"/></svg>
        <h4>企業客戶滿意度調查</h4>
        <p><span class="variable">{{1}}</span> 您好<br>作為我們的尊貴客戶，您的意見對我們非<br>常重要，請問您對上次服務滿意嗎?</p>
      </div>
      <div class="replies"><span>滿意</span><span>有改進的地方</span><span class="wide">不滿</span></div>
    </aside>
  </div>
</div>

<div class="overlay">
  <div class="modal" role="dialog">
    <header class="modal-head">
      <h1>Add Sample Content</h1>
      <svg width="22" height="22" viewBox="0 0 22 22"><path d="M1.500 1.500L20.500 20.500M20.500 1.500L1.500 20.500" stroke="#333" stroke-width="2.600" stroke-linecap="round"/></svg>
    </header>
    <div class="modal-main">
      <div class="form">
        <p class="intro">To help us understand what kind of message you want to send, you have the option to provide specific content examples for your template. You can add a sample template for one or all languages you are submitting.</p>
        <p class="intro">Make sure not to include any actual user or customer information, and provide only sample content in your examples. <a>Learn More</a></p>
        <h2>Header</h2>
        <p class="value">企業客戶滿意度調查</p>
        <h2 class="body-title">Body</h2>
        <p class="value">{{1}} 您好<br>作為我們的尊貴客戶，您的意見對我們非常重要，請問您對上次服務滿意嗎?</p>
        <div class="input"><span>Sunny Liao</span><i class="caret"></i><div class="highlight"></div></div>
        <h2>Buttons</h2>
        <ol class="list"><li><b>1.</b><span>滿意</span></li><li><b>2.</b><span>有改進的地方</span></li><li><b>3.</b><span>不滿</span></li></ol>
      </div>
      <div class="preview">
        <svg class="wall" width="612" height="842" viewBox="0 0 612 842"><use href="#doodles"/></svg>
        <h3>Preview</h3>
        <div class="bubble">
          <svg class="tail" width="14" height="20" viewBox="0 0 14 20"><path d="M14 0H2Q-.5 .5 1 3L14 20Z"/></svg>
          <h4>企業客戶滿意度調查</h4>
          <p><span class="name">Sunny Liao</span> 您好<br>作為我們的尊貴客戶，您的意見對我們非常重<br>要，請問您對上次服務滿意嗎?</p>
          <time>3:58 AM</time>
        </div>
        <div class="replies"><span>滿意</span><span>有改進的地方</span><span class="wide">不滿</span></div>
      </div>
    </div>
    <footer class="modal-foot"><div class="btn">Cancel</div><div class="btn primary">Done</div></footer>
  </div>
</div>
</body>
</html>
```
FILE: styles.css
```css
* { box-sizing: border-box; margin: 0; padding: 0; }
body {
  width: 1944px; height: 1254px; overflow: hidden;
  font-family: Roboto, "Noto Sans CJK SC", sans-serif;
  font-size: 25.2px; line-height: 36px; color: #222;
}
svg { display: block; flex: none; }
.defs { position: absolute; }

/* wallpaper line art */
.wall { position: absolute; left: 0; top: 0; fill: none; stroke: #d8cfc9; stroke-width: 1.600px; stroke-linejoin: round; stroke-linecap: round; }
#doodles path, .defs use, #spark, #star, #heart, #cloud, #note, #drop, #bolt, #bell, #camera { vector-effect: non-scaling-stroke; }
.bold { stroke: #cbc2bd; stroke-width: 2px; }
.ring { fill: none; stroke: #d8cfc9; stroke-width: 4px; }
.dots-s, .dots-l { stroke: none; }
.dots-s { marker: url(#ring-s); }
.dots-l { marker: url(#ring-l); }

/* page behind the dialog */
.page { display: flex; flex-direction: column; height: 1254px; background: #dadde1; }
.topbar { height: 50px; background: #f0f0f0; border-bottom: 1px solid #dcdcdc; flex: none; }
.navbar { height: 110px; flex: none; background: #fff; border-bottom: 2px solid #cfd0d2; display: flex; align-items: center; justify-content: space-between; margin-bottom: 12px; }
.template-select { width: 201px; height: 66px; margin: -3px 0 0 -1px; border: 2px solid #d2d2d2; border-radius: 11px; padding-left: 19px; display: flex; align-items: center; gap: 20px; }
.template-select span { padding-top: 2px; }
.help { display: flex; align-items: center; gap: 13px; width: 156px; margin-top: -3px; font-family: Inter, sans-serif; font-size: 21.600px; color: #0064d1; white-space: nowrap; }
.columns { display: flex; gap: 14px; flex: 1; min-height: 0; }
.sidebar { width: 188px; background: #fff; padding: 94px 28px 0 0; flex: none; }
.selected { height: 72px; background: #e7f3ff; border-radius: 0 11px 11px 0; margin-bottom: 28px; }
.select { height: 66px; border: 2px solid #d2d2d2; border-left: 0; border-radius: 0 11px 11px 0; display: flex; align-items: center; justify-content: flex-end; padding-right: 27px; }
.cards { width: 1512px; flex: none; display: flex; flex-direction: column; gap: 14px; }
.card { background: #fff; flex: none; display: flex; flex-direction: column; align-items: flex-end; }
.card-top { height: 122px; padding: 28px 28px 0 0; }
.sample-btn { height: 66px; width: 190px; background: #f0f0f0; border-radius: 11px; padding-right: 29px; line-height: 68px; text-align: right; }
.card-header { height: 332px; padding: 160px 42px 0 0; }
.card-body { height: 498px; padding: 160px 42px 0 0; }
.field { width: 1400px; height: 64px; border: 2px solid #d2d2d2; border-radius: 11px; padding: 12px 22px; text-align: right; color: #666; }
.area { height: 244px; position: relative; }
.grip { position: absolute; right: 1px; bottom: 1px; }
.info { margin: 24px 8px 0 0; }
.area + .info { margin-top: 23px; }
.card-footer { height: 120px; flex-direction: row; align-items: flex-start; gap: 15px; padding: 42px 0 0 43px; }
.card-footer h2 { font-size: 28.800px; }
.pill { margin-top: 6px; height: 32px; width: 104px; border-radius: 16px; background: #f0f0f0; font-size: 21.600px; font-weight: 700; line-height: 30px; text-align: center; }

/* chat preview */
.preview { position: relative; width: 612px; height: 842px; background: #e5ddd8; overflow: hidden; padding: 26px 44px 0 42px; }
.side { width: 216px; height: auto; flex: none; background: #e5ddd5; }
.side .bubble, .side .replies { width: 486px; margin-left: 2px; }
.preview h3 { position: relative; font-size: 25.200px; color: #4b4b4b; margin: 2px 0 22px -14px; }
.side h3 { margin-left: -13px; }
.bubble { position: relative; background: #fff; height: 170px; border-radius: 0 14px 14px 14px; padding: 10px 0 0 16px; box-shadow: 0 2px 1px rgba(0,0,0,.15); white-space: nowrap; }
.side .bubble { height: 206px; margin-bottom: 2px; }
.tail { position: absolute; left: -13px; top: 0; fill: #fff; }
.bubble h4 { font-size: 27px; font-weight: 700; color: #444; line-height: 34px; margin-bottom: 14px; }
.bubble p { font-family: Inter, "Noto Sans CJK SC", sans-serif; font-size: 24.480px; line-height: 34px; }
.name { letter-spacing: -.3px; }
.variable { letter-spacing: -.9px; }
.bubble time { position: absolute; right: 12px; bottom: 3px; font-family: Inter, sans-serif; font-size: 19.800px; line-height: 30px; color: #999; }
.replies { position: relative; display: grid; grid-template-columns: 262px 1fr; column-gap: 4px; row-gap: 2px; margin-top: 4px; }
.side .replies { grid-template-columns: 243px 1fr; row-gap: 4px; margin-top: 2px; }
.replies span { height: 62px; border-radius: 14px; background: #fff; color: #00a5f4; line-height: 60px; text-align: center; box-shadow: 0 2px 1px rgba(0,0,0,.15); }
.side .replies span { line-height: 63px; }
.replies .wide { grid-column: 1 / 3; line-height: 63px; }
.side .wide { height: 60px; }

/* dialog */
.overlay { position: absolute; inset: 0; height: 1254px; width: 1944px; background: rgba(0,0,0,.4); padding: 64px 0 0 188px; overflow: hidden; }
.modal { width: 1440px; height: 1044px; background: #fff; border-radius: 14px; padding: 0 28px; box-shadow: 0 22px 50px rgba(0,0,0,.2), 0 4px 7px rgba(0,0,0,.1); }
.modal-head { display: flex; justify-content: space-between; height: 94px; padding: 26px 11px 0 0; }
.modal-head h1 { font-size: 28.800px; color: #444; }
.modal-head svg { margin-top: 9px; }
.modal-main { display: flex; justify-content: space-between; height: 842px; }
.form { width: 736px; }
.intro { color: #4b4b4b; margin-bottom: 14px; }
.intro a { color: #005cc8; }
.form h2 { font-size: 25.200px; margin: 28px 0 14px; }
.form .body-title { margin-top: 30px; }
.value { color: #777; }
.input { position: relative; width: 736px; height: 66px; margin: 14px 0 28px; border: 2px solid #1877f2; border-radius: 10px; box-shadow: inset 0 0 0 4px #d0e2fa; padding: 0 0 4px 20px; display: flex; align-items: center; }
.caret { width: 2px; height: 30px; margin-left: -1px; background: #000; }
.highlight { position: absolute; left: -15px; top: -8px; width: 204px; height: 72px; border: 4px solid #ff2600; }
.list { list-style: none; display: flex; flex-direction: column; gap: 14px; }
.list li { display: flex; color: #777; height: 36px; }
.list b { font-family: Inter, sans-serif; font-variant-numeric: tabular-nums; font-weight: 400; font-size: 21.600px; color: #222; width: 29px; padding: 1px 6px 0 0; display: flex; justify-content: flex-end; }
.modal-foot { display: flex; justify-content: flex-end; gap: 16px; margin-top: 28px; }
.btn { height: 64px; width: 134px; border-radius: 11px; background: #f1f1f1; text-align: center; line-height: 65px; padding-left: 1px; }
.primary { width: 116px; background: #1078f0; color: #fff; font-weight: 700; padding: 0; }
```
